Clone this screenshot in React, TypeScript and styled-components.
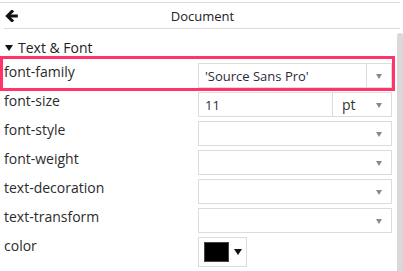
import styled, { createGlobalStyle } from 'styled-components';

const GlobalStyle = createGlobalStyle`
  html, body {
    margin: 0;
    padding: 0;
    background: #fff;
  }

  body {
    font-family: 'Open Sans', 'Noto Sans', sans-serif;
    color: #333;
  }
`;

const rows = [
  { label: 'font-family', kind: 'select', value: "'Source Sans Pro'", divider: true, highlight: true },
  { label: 'font-size', kind: 'size', value: '11', unit: 'pt' },
  { label: 'font-style', kind: 'select', value: '' },
  { label: 'font-weight', kind: 'select', value: '' },
  { label: 'text-decoration', kind: 'select', value: '' },
  { label: 'text-transform', kind: 'select', value: '' },
  { label: 'color', kind: 'color', value: '#000' },
];

const BackArrow = () => (
  <svg width="13" height="12" viewBox="0 0 13 12">
    <path d="M12.8 6H3" stroke="#111" strokeWidth="3" fill="none" />
    <path d="M7 1.4L2.4 6L7 10.6" stroke="#111" strokeWidth="3" fill="none" strokeLinecap="square" />
  </svg>
);

const App: React.FC = () => {
  return (
    <Page>
      <GlobalStyle />
      <Header>
        <HeaderBar>
          <BackBtn>
            <BackArrow />
          </BackBtn>
          <Title>Document</Title>
        </HeaderBar>
      </Header>
      <Main>
        <Panel>
          <SectionTitle>
            <Caret />
            Text &amp; Font
          </SectionTitle>
          {rows.map((row) => (
            <Row key={row.label} $highlight={row.highlight}>
              <Label>{row.label}</Label>
              {row.kind === 'select' && (
                <Control>
                  <Value>{row.value}</Value>
                  <ArrowBox $divider={row.divider}>
                    <GreyArrow />
                  </ArrowBox>
                </Control>
              )}
              {row.kind === 'size' && (
                <Control>
                  <Value>{row.value}</Value>
                  <Unit>
                    <UnitText>{row.unit}</UnitText>
                    <ArrowBox>
                      <GreyArrow />
                    </ArrowBox>
                  </Unit>
                </Control>
              )}
              {row.kind === 'color' && (
                <ColorBtn>
                  <Swatch style={{ background: row.value }} />
                  <BlackArrow />
                </ColorBtn>
              )}
            </Row>
          ))}
        </Panel>
        <ScrollThumb />
      </Main>
    </Page>
  );
};

const Page = styled.div`
  width: 403px;
  height: 271px;
  overflow: hidden;
  display: flex;
  flex-direction: column;
`;

const Header = styled.div`
  margin-top: 2px;
  border-top: 1px solid #dcdcdc;
  margin-right: 3px;
`;

const HeaderBar = styled.div`
  position: relative;
  height: 25px;
  margin: 0 0 0 4px;
  border-bottom: 1px solid #dcdcdc;
  display: flex;
  align-items: center;
  justify-content: center;
`;

const BackBtn = styled.div`
  position: absolute;
  left: 1px;
  top: 7px;
  display: flex;
`;

const Title = styled.div`
  font-size: 13px;
  color: #222;
  margin-left: 1px;
`;

const Main = styled.div`
  flex: 1;
  display: flex;
  min-height: 0;
`;

const Panel = styled.div`
  flex: 1;
  padding: 0 5px 0 3px;
`;

const SectionTitle = styled.div`
  display: flex;
  align-items: center;
  gap: 5px;
  height: 18px;
  padding: 9px 0 0 2px;
  margin-bottom: 3px;
  font-size: 14px;
  color: #222;
`;

const Caret = styled.span`
  width: 0;
  height: 0;
  border-left: 4px solid transparent;
  border-right: 4px solid transparent;
  border-top: 6px solid #111;
  margin-top: 1px;
`;

const Row = styled.div<{ $highlight?: boolean }>`
  display: flex;
  align-items: flex-start;
  height: 29px;
  box-sizing: border-box;
  outline: ${(p) => (p.$highlight ? '3px solid #ff3468' : 'none')};
`;

const Label = styled.div`
  width: 194px;
  padding: 3px 0 0 1px;
  font-size: 14px;
  color: #2b2b2b;
`;

const Control = styled.div`
  flex: 1;
  display: flex;
  height: 25px;
  margin-top: 4px;
  box-sizing: border-box;
  border: 1px solid #dcdcdc;
  background: #fff;
`;

const Value = styled.div`
  flex: 1;
  display: flex;
  align-items: center;
  padding-left: 6px;
  font-size: 13px;
  color: #2a2a3a;
`;

const ArrowBox = styled.div<{ $divider?: boolean }>`
  width: 24px;
  display: flex;
  align-items: center;
  justify-content: center;
  border-left: ${(p) => (p.$divider ? '1px solid #dcdcdc' : 'none')};
`;

const GreyArrow = styled.span`
  width: 0;
  height: 0;
  border-left: 3.5px solid transparent;
  border-right: 3.5px solid transparent;
  border-top: 5px solid #8a8a8a;
  margin-top: 1px;
`;

const Unit = styled.div`
  width: 58px;
  display: flex;
  border-left: 1px solid #dcdcdc;
`;

const UnitText = styled.div`
  flex: 1;
  display: flex;
  align-items: center;
  padding-left: 9px;
  font-size: 14px;
  color: #333;
`;

const ColorBtn = styled.div`
  width: 49px;
  height: 30px;
  margin-top: 4px;
  box-sizing: border-box;
  border: 1px solid #dcdcdc;
  display: flex;
  align-items: center;
  padding-left: 5px;
  gap: 5px;
`;

const Swatch = styled.div`
  width: 25px;
  height: 20px;
  box-sizing: border-box;
  border: 1px solid #444;
`;

const BlackArrow = styled.span`
  width: 0;
  height: 0;
  border-left: 4px solid transparent;
  border-right: 4px solid transparent;
  border-top: 6px solid #111;
`;

const ScrollThumb = styled.div`
  width: 6px;
  margin-top: 4px;
  background: #d9d9d9;
  border-radius: 3px 3px 0 0;
`;

export default App;
